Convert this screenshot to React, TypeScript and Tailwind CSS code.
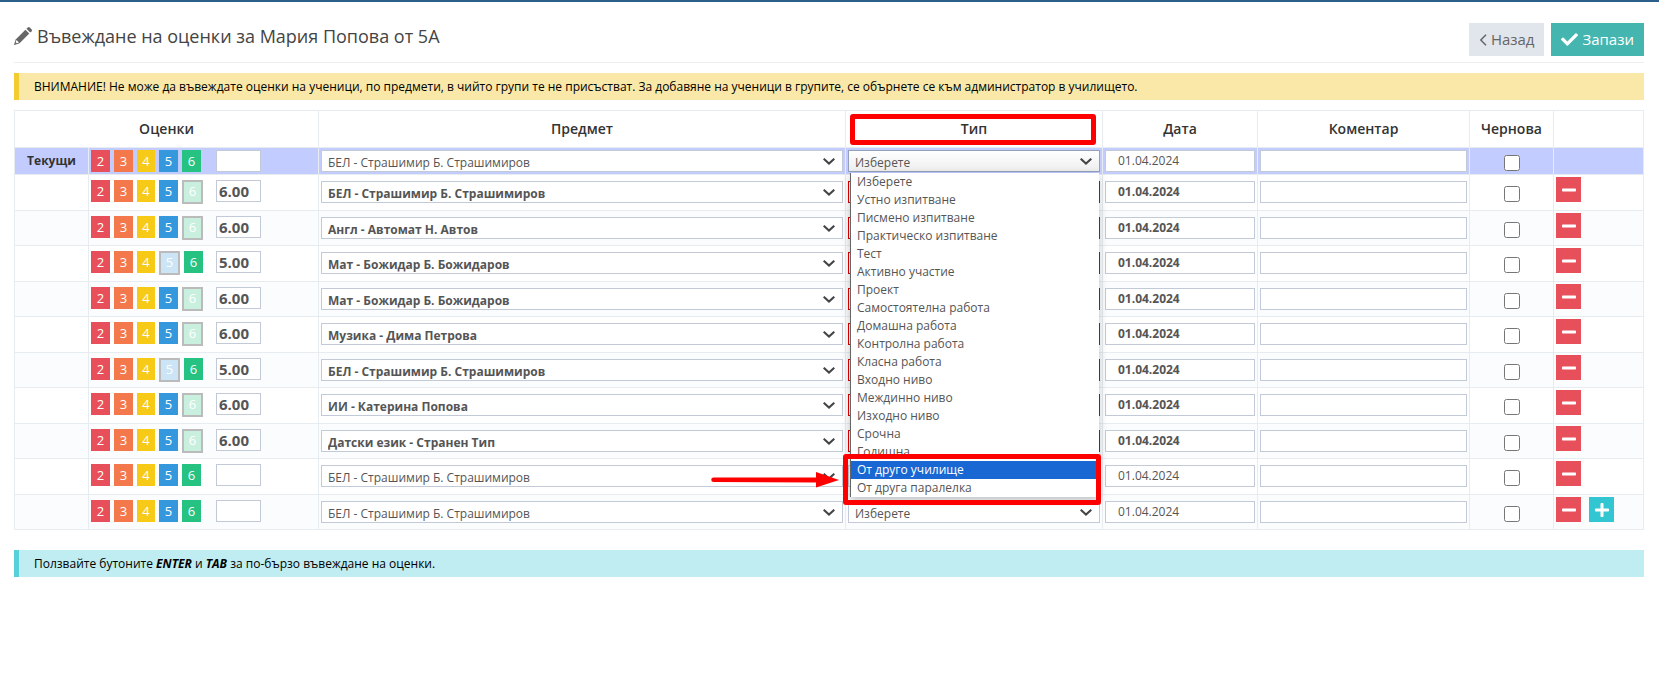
import React from "react";
import clsx from "clsx";
import { FaCheck, FaMinus, FaPlus } from "react-icons/fa";

const SUBJECT = "БЕЛ - Страшимир Б. Страшимиров";
const DATE = "01.04.2024";

const types = [
  "Изберете",
  "Устно изпитване",
  "Писмено изпитване",
  "Практическо изпитване",
  "Тест",
  "Активно участие",
  "Проект",
  "Самостоятелна работа",
  "Домашна работа",
  "Контролна работа",
  "Класна работа",
  "Входно ниво",
  "Междинно ниво",
  "Изходно ниво",
  "Срочна",
  "Годишна",
  "От друго училище",
  "От друга паралелка",
];

const marks = [
  { value: 2, color: "bg-[#e7505a]", size: "w-[19px]" },
  { value: 3, color: "bg-[#f3784b]", size: "w-[19px]" },
  { value: 4, color: "bg-[#f7ca18]", size: "w-[18px]" },
  { value: 5, color: "bg-[#3598dc]", size: "w-[19px]" },
  { value: 6, color: "bg-[#26c281]", size: "w-[19px]" },
];

type Row = { subject: string; mark?: number };

const rows: Row[] = [
  { subject: SUBJECT, mark: 6 },
  { subject: "Англ - Автомат Н. Автов", mark: 6 },
  { subject: "Мат - Божидар Б. Божидаров", mark: 5 },
  { subject: "Мат - Божидар Б. Божидаров", mark: 6 },
  { subject: "Музика - Дима Петрова", mark: 6 },
  { subject: SUBJECT, mark: 5 },
  { subject: "ИИ - Катерина Попова", mark: 6 },
  { subject: "Датски език - Странен Тип", mark: 6 },
  { subject: SUBJECT },
  { subject: SUBJECT },
];

const field = "block h-[22px] w-full border bg-white text-xs text-[#555]";

const Marks: React.FC<{ selected?: number }> = ({ selected }) => (
  <div className="flex items-start">
    <div className="flex w-[125px] items-start gap-1">
      {marks.map((m) =>
        m.value === selected ? (
          <button
            key={m.value}
            className="h-6 w-[21px] border-2 border-[#bbb] bg-white text-[13px] text-white"
          >
            <span
              className={clsx(
                "flex h-5 items-center justify-center",
                m.value === 5 ? "bg-[#cce5f6]" : "bg-[#c9f0df]"
              )}
            >
              {m.value}
            </span>
          </button>
        ) : (
          <button
            key={m.value}
            className={clsx("h-[22px] text-[13px] leading-5 text-white", m.color, m.size)}
          >
            {m.value}
          </button>
        )
      )}
    </div>
    <input
      aria-label="Оценка"
      defaultValue={selected ? `${selected}.00` : ""}
      className="h-[22px] w-[45px] border border-[#c2cad8] bg-white px-0.5 text-[15px] font-bold text-[#555]"
    />
  </div>
);

type SelectProps = {
  label: string;
  options: string[];
  bold?: boolean;
  invalid?: boolean;
  open?: boolean;
};

const Select: React.FC<SelectProps> = ({ label, options, bold, invalid, open }) => (
  <div className="relative">
    <select
      aria-label={label}
      className={clsx(
        field,
        "appearance-none pt-[3px] pl-1.5 leading-[18px]",
        bold && "font-bold",
        invalid && "border-[#e60000]",
        open && "border-[#93a1bb] bg-linear-to-t from-[#eee] to-white",
        !invalid && !open && "border-[#c2cad8]"
      )}
    >
      {options.map((o) => (
        <option key={o}>{o}</option>
      ))}
    </select>
    <svg
      viewBox="0 0 12 7"
      className="pointer-events-none absolute top-2 right-2 h-[7px] w-3"
      fill="none"
      stroke="#444"
      strokeWidth="2"
    >
      <path d="M.7 .7 6 5.6 11.3 .7" />
    </svg>
  </div>
);

const TypeMenu: React.FC = () => (
  <div className="absolute top-[25px] right-[3px] left-1 z-10">
    <ul className="border-l border-[#666] bg-white text-xs leading-[18px] text-[#555] shadow-[0_3px_8px_rgba(0,0,0,0.25)]">
      {types.map((t) => (
        <li
          key={t}
          className={clsx("pl-1.5", t === "От друго училище" && "bg-[#1967d2] text-white")}
        >
          {t}
        </li>
      ))}
    </ul>
    <div className="absolute -right-0.5 -bottom-2 -left-[7px] h-[51px] rounded-[3px] border-5 border-[#f00]" />
    <svg
      viewBox="0 0 130 16"
      className="absolute right-full bottom-[9px] mr-2.5 h-4 w-[130px]"
      fill="#f00"
    >
      <path d="M3.500 5.500H106V0L129 8 106 15.500V10.500L3.500 10A2.200 2.200 0 0 1 3.500 5.500Z" />
    </svg>
  </div>
);

type EntryProps = Row & { current?: boolean; last?: boolean };

const EntryRow: React.FC<EntryProps> = ({ subject, mark, current, last }) => {
  const bold = mark !== undefined;
  const cell = clsx(
    "border border-[#e7ecf1] px-0.5 align-top",
    current ? "pt-0.5" : "pt-1.5"
  );
  return (
    <tr
      className={clsx(
        current
          ? "h-[27px] bg-[#c3ccff]"
          : "odd:h-[35px] odd:bg-[#fbfcfd] even:h-9 last:h-9"
      )}
    >
      <th className="border border-[#e7ecf1] text-xs leading-5 font-bold text-[#333]">
        {current && "Текущи"}
      </th>
      <td
        className={clsx(
          "border border-[#e7ecf1] px-0.5 align-top",
          current ? "pt-0.5" : "pt-[5px]"
        )}
      >
        <Marks selected={mark} />
      </td>
      <td className={cell}>
        <Select label="Предмет" options={[subject]} bold={bold} />
      </td>
      <td className={clsx(cell, "relative")}>
        <Select label="Тип" options={types} invalid={bold} open={current} />
        {current && <TypeMenu />}
      </td>
      <td className={cell}>
        <input
          aria-label="Дата"
          defaultValue={DATE}
          className={clsx(field, "border-[#c2cad8] px-3 pb-px", bold && "font-bold")}
        />
      </td>
      <td className={cell}>
        <input aria-label="Коментар" className={clsx(field, "border-[#c2cad8]")} />
      </td>
      <td className={cell}>
        <input
          type="checkbox"
          aria-label="Чернова"
          className="mx-auto mt-[5px] block h-4 w-4"
        />
      </td>
      <td className="border border-[#e7ecf1] px-0.5 pt-0.5 align-top">
        {!current && (
          <div className="flex gap-2">
            <button
              aria-label="Премахни"
              className="flex h-[25px] w-[25px] justify-center bg-[#e7505a] pt-[5px] text-white"
            >
              <FaMinus size={16} />
            </button>
            {last && (
              <button
                aria-label="Добави"
                className="flex h-[25px] w-[25px] justify-center bg-[#32c5d2] pt-[5px] text-white"
              >
                <FaPlus size={16} />
              </button>
            )}
          </div>
        )}
      </td>
    </tr>
  );
};

const App: React.FC = () => {
  const head = "border border-[#e7ecf1] text-sm font-semibold text-[#333]";

  return (
    <main className="border-t-2 border-[#2d5f8b] bg-white pr-[15px] pl-3.5 font-['Open_Sans',sans-serif]">
      <header className="flex h-[61px] items-start justify-between border-b border-[#eee] pt-[21px]">
        <h1 className="flex items-center gap-[5px] pt-px text-lg leading-6 text-[#444]">
          <svg viewBox="0 0 18 18" className="h-[18px] w-[18px]" fill="#666">
            <path d="M12.400 1.800 13.800 .500Q14.800 -.4 15.800 .5L17.500 2.200Q18.400 3.200 17.600 4.200L16.200 5.600Z" />
            <path d="M11.400 2.700 15.300 6.600 5.600 16.300 .4 17.900Q0 18 .1 17.600L1.700 12.400Z" />
            <path d="M2.500 13 5 15.500 2.700 16.300 1.700 15.300Z" fill="#fff" />
          </svg>
          Въвеждане на оценки за Мария Попова от 5А
        </h1>
        <div className="flex gap-[7px]">
          <button className="flex h-[33px] items-center gap-1 bg-[#e1e5ec] px-2.5 text-[15px] text-[#666]">
            <svg viewBox="0 0 8 12" className="h-3 w-2" fill="none" stroke="#666" strokeWidth="1.500">
              <path d="M7 .8 1.800 6 7 11.200" />
            </svg>
            Назад
          </button>
          <button className="flex h-[33px] items-center gap-1 bg-[#45b6af] px-2.5 text-[15px] text-white">
            <FaCheck size={17} />
            Запази
          </button>
        </div>
      </header>

      <p className="mt-2.5 border-l-5 border-[#f3cc31] bg-[#fae8a9] pl-[15px] text-xs leading-[27px] text-black">
        ВНИМАНИЕ! Не може да въвеждате оценки на ученици, по предмети, в чийто групи те не
        присъстват. За добавяне на ученици в групите, се обърнете се към администратор в
        училището.
      </p>

      <table className="mt-2.5 w-full table-fixed border-collapse">
        <colgroup>
          <col className="w-[74px]" />
          <col className="w-[230px]" />
          <col />
          <col className="w-[257px]" />
          <col className="w-[155px]" />
          <col className="w-[212px]" />
          <col className="w-[84px]" />
          <col className="w-[90px]" />
        </colgroup>
        <thead>
          <tr className="h-[37px]">
            <th colSpan={2} className={head}>
              Оценки
            </th>
            <th className={head}>Предмет</th>
            <th className={clsx(head, "relative")}>
              Тип
              <div className="absolute top-[3px] right-1.5 left-1 h-[31px] rounded-[3px] border-5 border-[#f00]" />
            </th>
            <th className={head}>Дата</th>
            <th className={head}>Коментар</th>
            <th className={head}>Чернова</th>
            <th className={head} />
          </tr>
        </thead>
        <tbody>
          <EntryRow subject={SUBJECT} current />
          {rows.map((row, i) => (
            <EntryRow key={i} {...row} last={i === rows.length - 1} />
          ))}
        </tbody>
      </table>

      <p className="mt-5 border-l-5 border-[#58d0da] bg-[#c0edf1] pl-[15px] text-xs leading-[27px] text-black">
        Ползвайте бутоните <b className="italic">ENTER</b> и <b className="italic">TAB</b> за
        по-бързо въвеждане на оценки.
      </p>
    </main>
  );
};

export default App;
